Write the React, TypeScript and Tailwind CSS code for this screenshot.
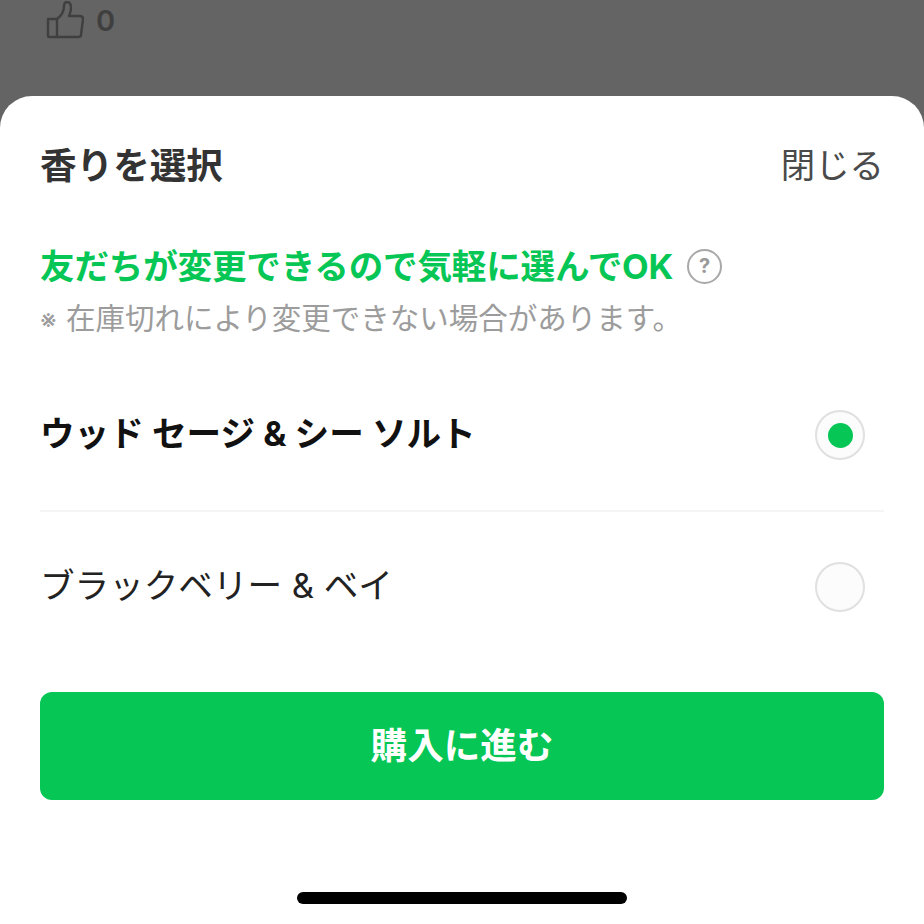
import React, { useState } from 'react';

const FONT = 'Inter, "Noto Sans CJK JP", "Liberation Sans", sans-serif';

const SCENTS = [
  'ウッド セージ & シー ソルト',
  'ブラックベリー & ベイ',
];

const ThumbIcon = () => (
  <svg width="38" height="38" viewBox="0 0 38 38" fill="none" stroke="#3f3f3f" strokeWidth="2.4" strokeLinejoin="round" strokeLinecap="round">
    <path d="M2 18h9v18H3a1 1 0 0 1-1-1V18z" />
    <path d="M11 18c4-3 7-8 7-13 0-2 1-4 3-4 3 0 4 3 4 6 0 3-1 6-2 8h11c2 0 3 1 3 3l-2 16c0 1-1 2-3 2H11" />
  </svg>
);

const HelpIcon = () => (
  <span className="flex h-[35px] w-[35px] shrink-0 items-center justify-center rounded-full border-[2.5px] border-[#a8a8a8] text-[20px] font-bold leading-none text-[#9a9a9a]">
    ?
  </span>
);

export default function App() {
  const [selected, setSelected] = useState(0);

  return (
    <div className="relative h-[924px] w-[924px] overflow-hidden bg-[#646464]" style={{ fontFamily: FONT }}>
      {/* page behind the sheet */}
      <div className="flex h-[96px] shrink-0 items-start gap-[12px] pl-[46px] pt-[1px]">
        <ThumbIcon />
        <span className="pt-[4px] text-[29px] font-semibold leading-[32px] text-[#3f3f3f]">0</span>
      </div>

      {/* bottom sheet */}
      <div className="flex h-[828px] flex-col rounded-t-[32px] bg-white px-[40px]">
        <header className="flex h-[140px] shrink-0 items-center justify-between">
          <h2 className="text-[36.6px] font-bold leading-none text-[#333333]">香りを選択</h2>
          <button className="text-[34.4px] font-normal leading-none text-[#4a4a4a]">閉じる</button>
        </header>

        <div className="flex shrink-0 items-center gap-[14px]">
          <p className="text-[34.6px] font-bold leading-[60px] tracking-[-0.2px] text-[#06c755]">
            友だちが変更できるので気軽に選んでOK
          </p>
          <HelpIcon />
        </div>
        <p className="shrink-0 text-[29.5px] leading-[44px] text-[#9c9c9c]">
          <span className="mr-[1px] text-[26px]">※</span> 在庫切れにより変更できない場合があります。
        </p>

        <ul className="mt-[18px] shrink-0">
          {SCENTS.map((name, i) => (
            <li key={name} className={i === 0 ? 'border-b-[2px] border-[#f5f5f5]' : ''}>
              <button
                onClick={() => setSelected(i)}
                className="flex h-[150px] w-full items-center justify-between pr-[19px] text-left"
              >
                <span className={`pb-[4px] text-[34.6px] leading-none ${selected === i ? 'font-bold text-[#111111]' : 'font-normal text-[#222222]'}`}>
                  {name}
                </span>
                <span className="flex h-[50px] w-[50px] items-center justify-center rounded-full border-[2.5px] border-[#e0e0e0] bg-[#fcfcfc]">
                  {selected === i && <span className="h-[25px] w-[25px] rounded-full bg-[#06c755]" />}
                </span>
              </button>
            </li>
          ))}
        </ul>

        <button className="mt-[30px] h-[108px] w-full shrink-0 rounded-[12px] bg-[#06c755] text-[36.6px] font-bold text-white">
          購入に進む
        </button>

        <div className="mt-[92px] h-[12px] w-[330px] shrink-0 self-center rounded-full bg-black" />
      </div>
    </div>
  );
}
